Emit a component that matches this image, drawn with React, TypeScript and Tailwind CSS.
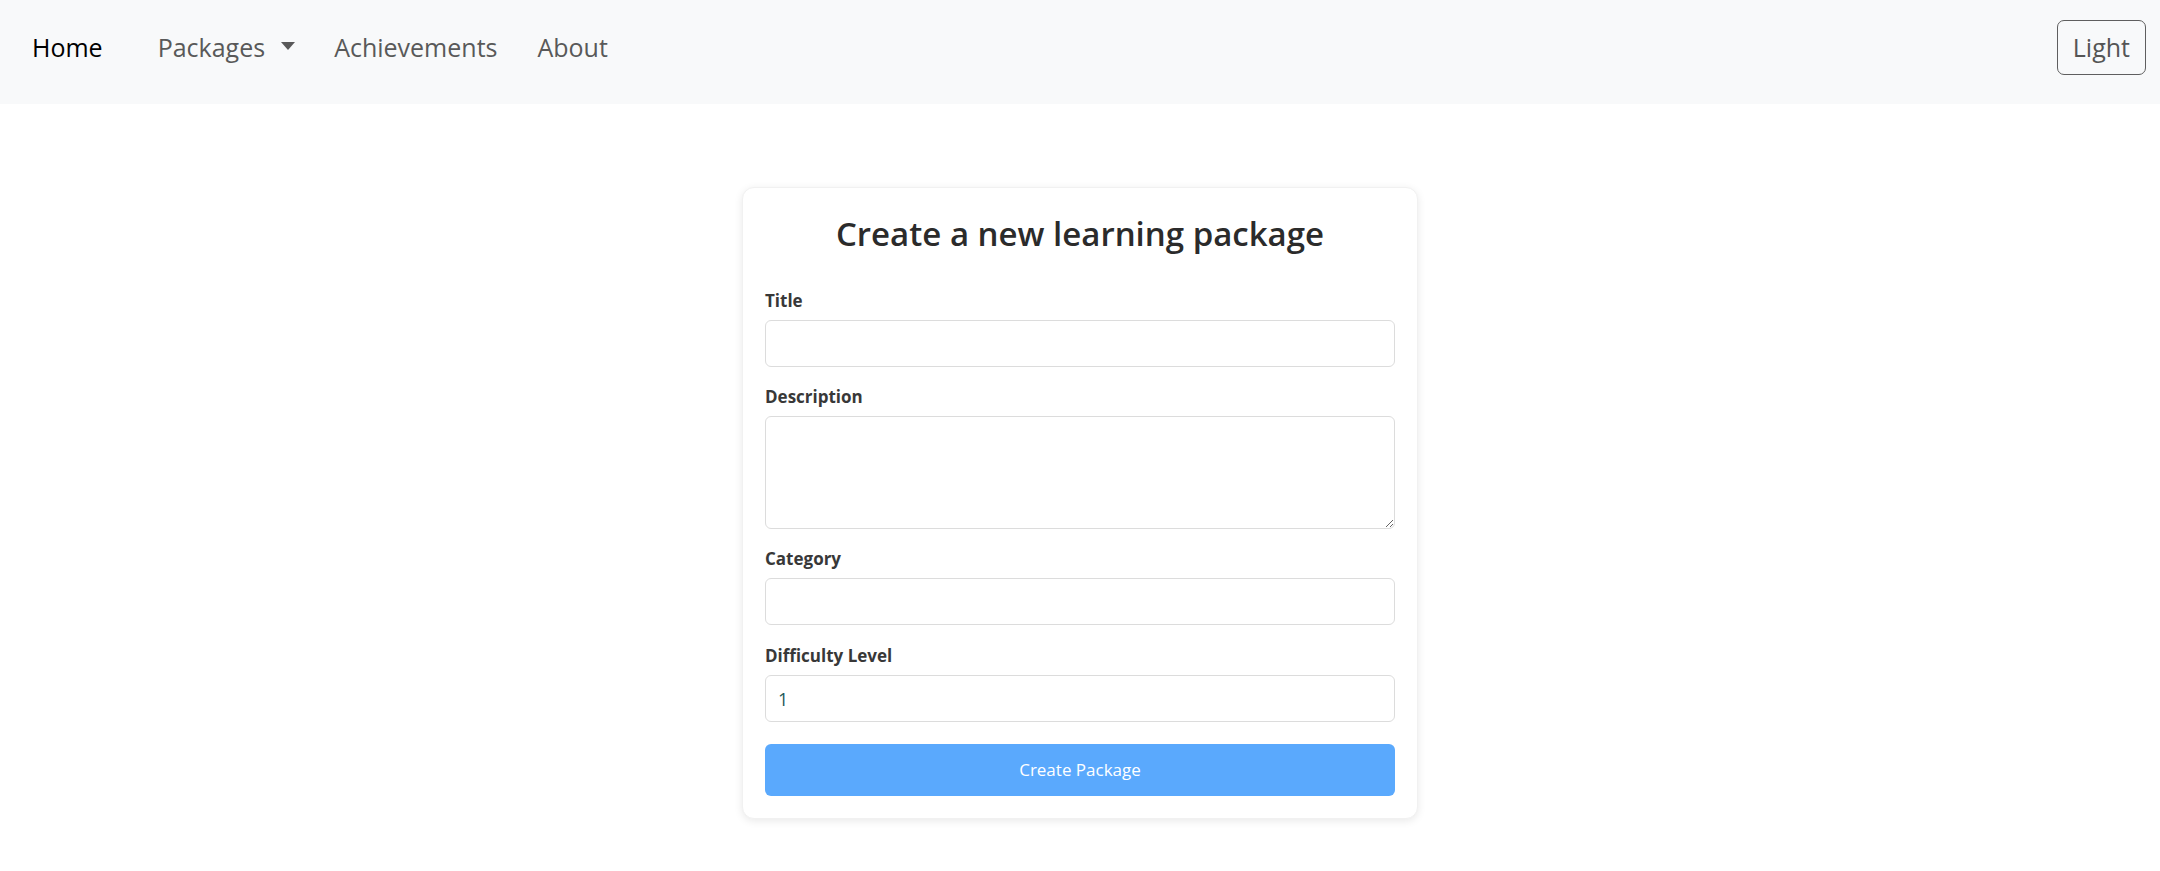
import React from "react";

const font = { fontFamily: '"Open Sans", "Noto Sans", Arial, sans-serif' };

function Field({
  label,
  children,
  className = "",
}: {
  label: string;
  children: React.ReactNode;
  className?: string;
}) {
  return (
    <div className={"flex flex-col " + className}>
      <label className="mb-[6px] h-[26px] text-[17px] leading-[26px] font-bold text-[#383838]">
        {label}
      </label>
      {children}
    </div>
  );
}

export default function App() {
  const inputCls =
    "block w-full h-[47px] rounded-[6px] border border-[#dcdcdc] bg-white px-[12px] text-[18px] outline-none";
  return (
    <div className="min-h-[871px] bg-white" style={font}>
      <nav className="flex h-[104px] items-center justify-between bg-[#f8f9fa] pb-[10px] pl-[32px] pr-[14px]">
        <div className="flex items-center text-[25px] leading-[34px]">
          <span className="text-black">Home</span>
          <div className="ml-[55px] flex items-center text-[#595959]">
            <span>Packages</span>
            <svg
              className="ml-[16px] mt-[-2px]"
              width="14"
              height="8"
              viewBox="0 0 14 8"
            >
              <polygon points="0,0 14,0 7,8" fill="#595959" />
            </svg>
          </div>
          <span className="ml-[39px] text-[#595959]">Achievements</span>
          <span className="ml-[40px] text-[#595959]">About</span>
        </div>
        <button className="flex h-[55px] items-center rounded-[7px] border border-[#5f5f5f] px-[15px] text-[25px] leading-none text-[#555]">
          Light
        </button>
      </nav>

      <main className="flex justify-center pt-[83px]">
        <div className="w-[676px] rounded-[12px] border border-[#f1f1f1] bg-white p-[22px] shadow-[0_2px_8px_rgba(0,0,0,0.09)]">
          <h1 className="mb-[28px] h-[50px] text-center text-[33px] leading-[48px] font-semibold text-[#2b2b2b]">
            Create a new learning package
          </h1>
          <Field label="Title" className="mb-[17px]">
            <input type="text" className={inputCls} />
          </Field>
          <Field label="Description" className="mb-[17px]">
            <textarea
              className="block h-[113px] w-full rounded-[6px] border border-[#dcdcdc] bg-white px-[12px] py-[8px] text-[18px] outline-none"
            />
          </Field>
          <Field label="Category" className="mb-[18px]">
            <input type="text" className={inputCls} />
          </Field>
          <Field label="Difficulty Level" className="mb-[22px]">
            <input
              type="text"
              defaultValue="1"
              className={inputCls + " text-[#24585a]"}
            />
          </Field>
          <button className="block h-[52px] w-full rounded-[6px] bg-[#5aa9fd] text-[17px] text-white">
            Create Package
          </button>
        </div>
      </main>
    </div>
  );
}
